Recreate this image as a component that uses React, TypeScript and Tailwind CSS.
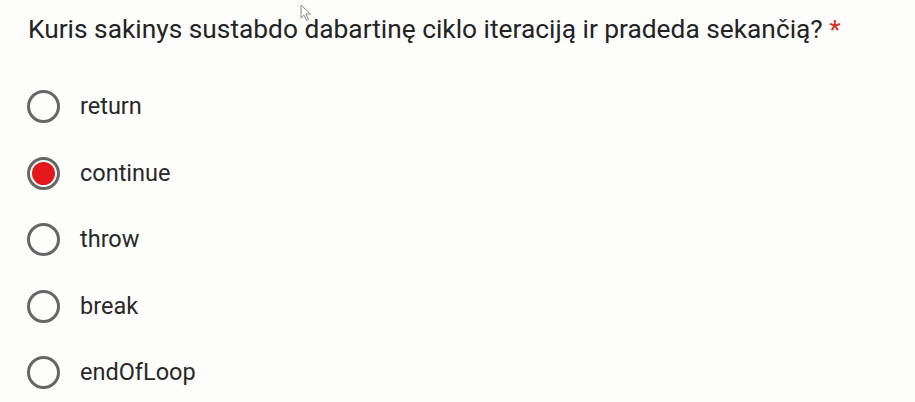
import React from "react";

const options = ["return", "continue", "throw", "break", "endOfLoop"];

function Radio({ checked }: { checked: boolean }) {
  return (
    <span className="relative flex h-[33px] w-[33px] shrink-0 items-center justify-center rounded-full border-[3px] border-[#666666]">
      {checked && <span className="h-[23px] w-[23px] rounded-full bg-[#e3171c]" />}
    </span>
  );
}

export default function App() {
  return (
    <div
      className="relative h-[402px] w-[915px] overflow-hidden bg-[#fdfdfb] text-[#232323]"
      style={{ fontFamily: "Roboto, 'Noto Sans', sans-serif" }}
    >
      <div className="pl-[28px] pt-[12px] text-[26.3px] leading-[34px]">
        Kuris sakinys sustabdo dabartinę ciklo iteraciją ir pradeda sekančią?{" "}
        <span className="text-[#d93025]">*</span>
      </div>
      <div className="mt-[44px] flex flex-col gap-[33.5px] pl-[27px]">
        {options.map((o, i) => (
          <div key={o} className="flex h-[33px] items-center gap-[20px]">
            <Radio checked={i === 1} />
            <span className="text-[23.5px] leading-[33px] text-[#282828]">{o}</span>
          </div>
        ))}
      </div>
      <svg className="absolute left-[300px] top-[4px]" width="12" height="18" viewBox="0 0 12 18">
        <path d="M1 1 L1 14 L4 11 L6.5 16.5 L8.5 15.5 L6 10 L10.5 10 Z" fill="#fff" stroke="#8a8a8a" strokeWidth="1" />
      </svg>
    </div>
  );
}
